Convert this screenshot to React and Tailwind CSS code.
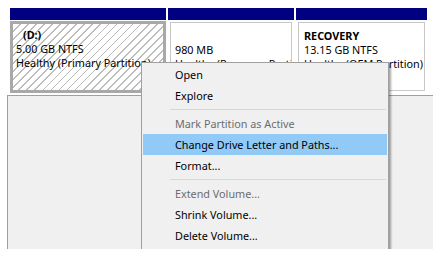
const MENU = [
  { label: 'Open' },
  { label: 'Explore' },
  { sep: true },
  { label: 'Mark Partition as Active', disabled: true },
  { label: 'Change Drive Letter and Paths...', active: true },
  { label: 'Format...' },
  { sep: true },
  { label: 'Extend Volume...', disabled: true },
  { label: 'Shrink Volume...' },
  { label: 'Delete Volume...' },
  { sep: true },
  { label: 'Properties' },
  { sep: true },
  { label: 'Help' },
];

function ContextMenu() {
  return (
    <div className="absolute left-[141px] top-[62px] w-[248px] border border-[#a0a0a0] bg-[#f0f0f0] p-[1px] shadow-[2px_2px_2px_rgba(0,0,0,0.35)]">
      {MENU.map((item, i) =>
        item.sep ? (
          <div key={i} className="h-[7px] flex items-center pl-[27px] pr-[1px]">
            <div className="h-px w-full bg-[#d7d7d7]" />
          </div>
        ) : (
          <div
            key={i}
            className={
              'h-[21px] flex items-center pl-[32px] whitespace-nowrap ' +
              (item.active ? 'bg-[#91c9f7] ' : '') +
              (item.disabled ? 'text-[#6d6d6d]' : 'text-black')
            }
          >
            {item.label}
          </div>
        )
      )}
    </div>
  );
}

export default function App() {
  return (
    <div className="w-[433px] h-[255px] bg-white font-['Segoe_UI','Noto_Sans',sans-serif] text-[10.8px] leading-[14px] text-black">
      <div className="relative h-[249px] overflow-hidden">
        {/* Disk row */}
        <div className="flex gap-[2px] pl-[10px] pt-[8px] h-[93px]">
          {/* Selected partition (D:) */}
          <div className="w-[156px] flex flex-col">
            <div className="h-[12px] bg-[#000080]" />
            <div className="flex-1 pt-[1px] bg-white">
              <div className="h-full border-[3px] border-[#a8a8a8] bg-[repeating-linear-gradient(135deg,#ffffff_0px,#ffffff_4.5px,#bcbcbc_4.5px,#bcbcbc_5.7px)] pt-[4px] pl-[3px] overflow-hidden whitespace-nowrap">
                <div className="font-bold pl-[7px]">(D:)</div>
                <div>5.00 GB NTFS</div>
                <div>Healthy (Primary Partition)</div>
              </div>
            </div>
          </div>

          {/* Recovery partition 980 MB */}
          <div className="w-[126px] flex flex-col">
            <div className="h-[12px] bg-[#000080]" />
            <div className="flex-1 p-[2px] bg-white">
              <div className="h-full border border-[#c8c8c8] pt-[6px] pl-[4px] overflow-hidden whitespace-nowrap">
                <div>&nbsp;</div>
                <div>980 MB</div>
                <div>Healthy (Recovery Partition)</div>
              </div>
            </div>
          </div>

          {/* OEM partition */}
          <div className="w-[131px] flex flex-col">
            <div className="h-[12px] bg-[#000080]" />
            <div className="flex-1 p-[2px] bg-white">
              <div className="h-full border border-[#c8c8c8] pt-[6px] pl-[5px] overflow-hidden whitespace-nowrap">
                <div className="font-bold">RECOVERY</div>
                <div>13.15 GB NTFS</div>
                <div>Healthy (OEM Partition)</div>
              </div>
            </div>
          </div>
        </div>

        {/* Next disk row */}
        <div className="mt-[2px] ml-[7px] h-[200px] border-t border-l border-[#a0a0a0] bg-[#f0f0f0]" />

        <ContextMenu />
      </div>
    </div>
  );
}
